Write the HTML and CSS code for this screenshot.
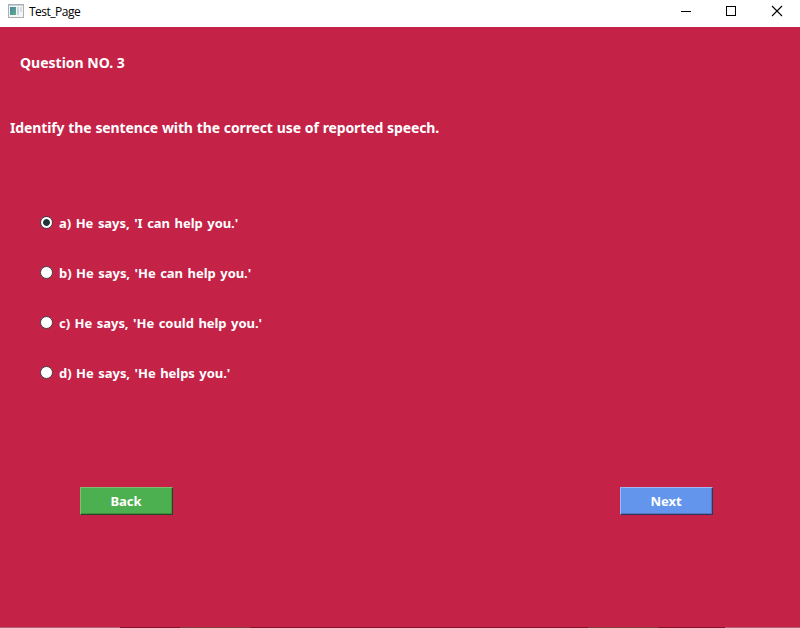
FILE: index.html
```
<!DOCTYPE html>
<html lang="en">
<head>
<meta charset="utf-8">
<title>Test_Page</title>
<link rel="stylesheet" href="styles.css">
</head>
<body>
<header class="titlebar">
  <svg class="app-icon" width="16" height="14" viewBox="0 0 16 14">
    <defs><linearGradient id="pane" x1="0" y1="0" x2="1" y2="1"><stop offset="0" stop-color="#4c83a4"/><stop offset="1" stop-color="#5fae86"/></linearGradient></defs>
    <rect x=".5" y=".5" width="15" height="13" fill="#f3f5f6" stroke="#a9b0b5"/>
    <path d="M1 1.5h14" stroke="#cbd3da"/>
    <rect x="2" y="3" width="6" height="8" fill="url(#pane)"/>
    <rect x="9" y="3" width="2" height="8" fill="#c6dcd9"/>
    <rect x="12" y="3" width="2" height="5" fill="#d5dde2"/>
  </svg>
  <span class="title">Test_Page</span>
  <div class="controls">
    <svg width="46" height="24" viewBox="0 0 46 24"><path d="M19 11.5h10" stroke="#000"/></svg>
    <svg width="46" height="24" viewBox="0 0 46 24"><rect x="18.5" y="6.5" width="9" height="9" fill="none" stroke="#000"/></svg>
    <svg width="46" height="24" viewBox="0 0 46 24"><path d="M18 6l10 10M28 6L18 16" stroke="#000" stroke-width="1.1"/></svg>
  </div>
</header>
<main class="page">
  <h1 class="number"><span>Question NO. 3</span></h1>
  <p class="question"><span>Identify the sentence with the correct use of reported speech.</span></p>
  <div class="options">
    <label class="option"><input type="radio" name="answer" checked><span>a) He says, 'I can help you.'</span></label>
    <label class="option"><input type="radio" name="answer"><span>b) He says, 'He can help you.'</span></label>
    <label class="option"><input type="radio" name="answer"><span>c) He says, 'He could help you.'</span></label>
    <label class="option"><input type="radio" name="answer"><span>d) He says, 'He helps you.'</span></label>
  </div>
  <div class="actions">
    <button class="button back">Back</button>
    <button class="button next">Next</button>
  </div>
  <div class="edge"></div>
</main>
</body>
</html>
```
FILE: styles.css
```
* { box-sizing: border-box; }
body {
  margin: 0;
  width: 800px;
  height: 628px;
  overflow: hidden;
  display: flex;
  flex-direction: column;
  font-family: "Noto Sans", sans-serif;
}
.titlebar {
  height: 27px;
  flex: none;
  display: flex;
  align-items: flex-start;
  padding-left: 8px;
  background: #fff;
  color: #000;
}
.app-icon { margin-top: 4px; }
.title {
  margin-left: 5px;
  font: 12px/24px "Open Sans", sans-serif;
  letter-spacing: -0.5px;
}
.controls { display: flex; margin-left: auto; }
.page {
  flex: 1;
  display: flex;
  flex-direction: column;
  background: #c42247;
  color: #fff;
  font-weight: 700;
}
.number, .question {
  margin: 0;
  font-size: 14px;
  line-height: 20px;
  font-weight: 700;
  white-space: nowrap;
}
.number { padding: 26px 0 0 20px; letter-spacing: 0; }
.question { padding: 45px 0 0 10px; letter-spacing: -0.13px; word-spacing: 0.45px; }
.options {
  display: flex;
  flex-direction: column;
  gap: 30px;
  padding: 75px 0 0 40px;
}
.option {
  display: flex;
  align-items: center;
  height: 20px;
  font-size: 13px;
  line-height: 20px;
  letter-spacing: -0.06px;
  word-spacing: 1.3px;
  white-space: nowrap;
}
.option input {
  appearance: none;
  width: 13px;
  height: 13px;
  margin: 0 6px 1px 0;
  border: 1px solid #423c43;
  border-radius: 50%;
  background: #fff;
}
.option input:checked {
  background: radial-gradient(circle, #263638 3px, #fff 3.8px);
}
.actions {
  display: flex;
  justify-content: space-between;
  padding: 104px 87px 0 80px;
}
.button {
  width: 93px;
  height: 28px;
  padding: 1px 1px 0 0;
  border: 1px solid;
  border-radius: 0;
  color: #fff;
  font: 700 13px/25px "Noto Sans", sans-serif;
}
.back {
  background: #4caf50;
  border-color: #80bd70 #26452b #26452b #80bd70;
  box-shadow: inset -1px -1px #41913f;
}
.next {
  background: #6495ed;
  border-color: #a0b8f0 #2d355f #2d355f #a0b8f0;
  box-shadow: inset -1px -1px #5578bd;
}
.edge {
  height: 1px;
  margin-top: auto;
  background: linear-gradient(90deg, #b35f78 120px, #86102e 120px 180px, #804039 180px 250px, #86102e 250px 588px, #804039 588px 658px, #86102e 658px 725px, #b35f78 725px);
}
```
